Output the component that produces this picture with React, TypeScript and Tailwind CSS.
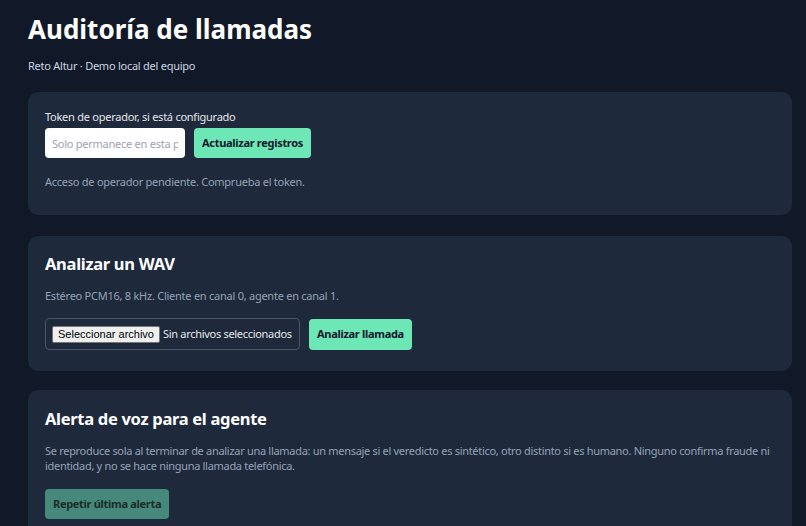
export default function App() {
  return (
    <div className="min-h-screen bg-[#111827] pl-[28px] pr-[14px] pt-[13px] pb-6 font-['Noto_Sans',sans-serif] text-[#e5e7eb]">
      <h1 className="text-[26px] font-bold leading-[32px] text-white">Auditoría de llamadas</h1>
      <p className="mt-[13px] text-[11px] leading-4 tracking-[-0.25px] text-[#cbd5e1]">Reto Altur · Demo local del equipo</p>

      <section className="mt-[18px] rounded-[10px] bg-[#1e293b] px-[17px] pt-[17px] pb-[25px]">
        <label className="block text-[11px] leading-4 tracking-[-0.25px] text-[#e5e7eb]">Token de operador, si está configurado</label>
        <div className="mt-[3px] flex items-center gap-[9px]">
          <input
            type="password"
            placeholder="Solo permanece en esta pestaña"
            className="h-[30px] w-[140px] rounded-[4px] bg-white px-[7px] text-[11px] tracking-[-0.25px] text-gray-900 placeholder:text-[#9ca3af] outline-none"
          />
          <button className="h-[30px] rounded-[4px] bg-[#6ee7b7] px-[8px] text-[11px] font-bold tracking-[-0.3px] text-[#0f172a]">
            Actualizar registros
          </button>
        </div>
        <p className="mt-[16px] text-[11px] leading-4 tracking-[-0.25px] text-[#94a3b8]">Acceso de operador pendiente. Comprueba el token.</p>
      </section>

      <section className="mt-[21px] rounded-[10px] bg-[#1e293b] px-[17px] pt-[16px] pb-[21px]">
        <h2 className="text-[16.5px] font-bold leading-6 tracking-[-0.3px] text-white">Analizar un WAV</h2>
        <p className="mt-[12px] text-[11px] leading-4 tracking-[-0.25px] text-[#94a3b8]">Estéreo PCM16, 8 kHz. Cliente en canal 0, agente en canal 1.</p>
        <div className="mt-[14px] flex items-center gap-[9px]">
          <div className="flex h-[32px] w-[255px] shrink-0 items-center whitespace-nowrap rounded-[4px] border border-[#475569] px-[6px]">
            <span className="shrink-0 rounded-[2px] border border-[#767676] bg-[#efefef] px-[5px] font-['Liberation_Sans',sans-serif] text-[11px] leading-[15px] text-black">
              Seleccionar archivo
            </span>
            <span className="ml-[3px] text-[11px] tracking-[-0.3px] text-[#e5e7eb]">Sin archivos seleccionados</span>
          </div>
          <button className="h-[31px] rounded-[4px] bg-[#6ee7b7] px-[8px] text-[11px] font-bold tracking-[-0.3px] text-[#0f172a]">
            Analizar llamada
          </button>
        </div>
      </section>

      <section className="mt-[19px] rounded-[10px] bg-[#1e293b] px-[17px] pt-[17px] pb-[21px]">
        <h2 className="text-[16.5px] font-bold leading-6 tracking-[-0.3px] text-white">Alerta de voz para el agente</h2>
        <p className="mt-[12px] text-[11px] leading-[15px] tracking-[-0.3px] text-[#94a3b8]">
          Se reproduce sola al terminar de analizar una llamada: un mensaje si el veredicto es sintético, otro distinto si es humano. Ninguno confirma fraude ni identidad, y no se hace ninguna llamada telefónica.
        </p>
        <button disabled className="mt-[16px] h-[30px] rounded-[4px] bg-[#468879] px-[8px] text-[11px] font-bold tracking-[-0.3px] text-[#1a2e2a]">
          Repetir última alerta
        </button>
      </section>
    </div>
  );
}
